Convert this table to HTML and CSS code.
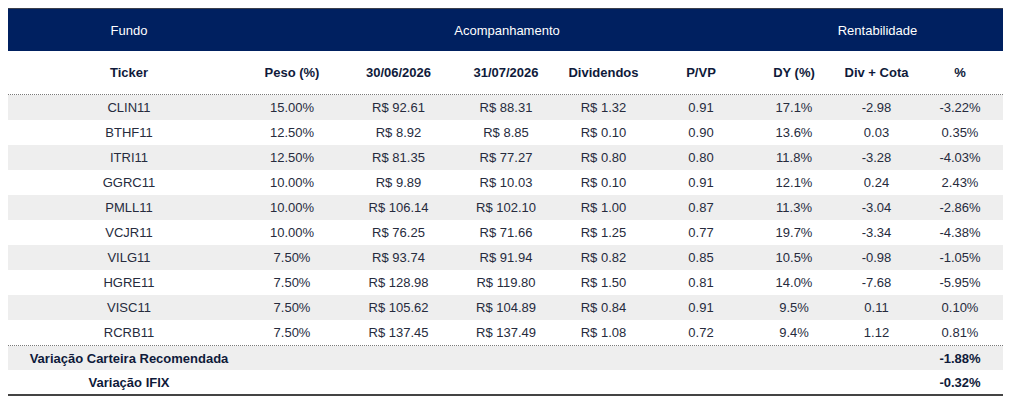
FILE: index.html
```html
<!DOCTYPE html>
<html lang="pt-BR">
<head>
<meta charset="utf-8">
<link rel="stylesheet" href="styles.css">
</head>
<body>
<div class="table">
  <div class="row head">
    <div class="c first">Fundo</div>
    <div class="c acomp">Acompanhamento</div>
    <div class="c rent">Rentabilidade</div>
  </div>
  <div class="row sub">
    <div class="c first">Ticker</div>
    <div class="c">Peso (%)</div>
    <div class="c">30/06/2026</div>
    <div class="c">31/07/2026</div>
    <div class="c">Dividendos</div>
    <div class="c">P/VP</div>
    <div class="c">DY (%)</div>
    <div class="c">Div + Cota</div>
    <div class="c">%</div>
  </div>
  <div class="body">
    <div class="row data grey"><div class="c first">CLIN11</div><div class="c">15.00%</div><div class="c">R$ 92.61</div><div class="c">R$ 88.31</div><div class="c">R$ 1.32</div><div class="c">0.91</div><div class="c">17.1%</div><div class="c">-2.98</div><div class="c">-3.22%</div></div>
    <div class="row data"><div class="c first">BTHF11</div><div class="c">12.50%</div><div class="c">R$ 8.92</div><div class="c">R$ 8.85</div><div class="c">R$ 0.10</div><div class="c">0.90</div><div class="c">13.6%</div><div class="c">0.03</div><div class="c">0.35%</div></div>
    <div class="row data grey"><div class="c first">ITRI11</div><div class="c">12.50%</div><div class="c">R$ 81.35</div><div class="c">R$ 77.27</div><div class="c">R$ 0.80</div><div class="c">0.80</div><div class="c">11.8%</div><div class="c">-3.28</div><div class="c">-4.03%</div></div>
    <div class="row data"><div class="c first">GGRC11</div><div class="c">10.00%</div><div class="c">R$ 9.89</div><div class="c">R$ 10.03</div><div class="c">R$ 0.10</div><div class="c">0.91</div><div class="c">12.1%</div><div class="c">0.24</div><div class="c">2.43%</div></div>
    <div class="row data grey"><div class="c first">PMLL11</div><div class="c">10.00%</div><div class="c">R$ 106.14</div><div class="c">R$ 102.10</div><div class="c">R$ 1.00</div><div class="c">0.87</div><div class="c">11.3%</div><div class="c">-3.04</div><div class="c">-2.86%</div></div>
    <div class="row data"><div class="c first">VCJR11</div><div class="c">10.00%</div><div class="c">R$ 76.25</div><div class="c">R$ 71.66</div><div class="c">R$ 1.25</div><div class="c">0.77</div><div class="c">19.7%</div><div class="c">-3.34</div><div class="c">-4.38%</div></div>
    <div class="row data grey"><div class="c first">VILG11</div><div class="c">7.50%</div><div class="c">R$ 93.74</div><div class="c">R$ 91.94</div><div class="c">R$ 0.82</div><div class="c">0.85</div><div class="c">10.5%</div><div class="c">-0.98</div><div class="c">-1.05%</div></div>
    <div class="row data"><div class="c first">HGRE11</div><div class="c">7.50%</div><div class="c">R$ 128.98</div><div class="c">R$ 119.80</div><div class="c">R$ 1.50</div><div class="c">0.81</div><div class="c">14.0%</div><div class="c">-7.68</div><div class="c">-5.95%</div></div>
    <div class="row data grey"><div class="c first">VISC11</div><div class="c">7.50%</div><div class="c">R$ 105.62</div><div class="c">R$ 104.89</div><div class="c">R$ 0.84</div><div class="c">0.91</div><div class="c">9.5%</div><div class="c">0.11</div><div class="c">0.10%</div></div>
    <div class="row data"><div class="c first">RCRB11</div><div class="c">7.50%</div><div class="c">R$ 137.45</div><div class="c">R$ 137.49</div><div class="c">R$ 1.08</div><div class="c">0.72</div><div class="c">9.4%</div><div class="c">1.12</div><div class="c">0.81%</div></div>
  </div>
  <div class="summary">
    <div class="row total grey"><div class="c first">Variação Carteira Recomendada</div><div class="c last">-1.88%</div></div>
    <div class="row total"><div class="c first">Variação IFIX</div><div class="c last">-0.32%</div></div>
  </div>
</div>
</body>
</html>
```

FILE: styles.css
```css
html, body {
  margin: 0;
  padding: 0;
  background: #ffffff;
}

body {
  font-family: "Liberation Sans", Arial, sans-serif;
  font-size: 13px;
  color: #262b3d;
}

.table {
  width: 995px;
  margin: 8px 0 0 8px;
}

.row {
  display: grid;
  grid-template-columns: 234px 100px 113px 102px 93px 102px 84px 81px 86px;
  align-items: center;
}

.c {
  text-align: center;
  white-space: nowrap;
}

.first {
  padding-left: 8px;
}

.head {
  height: 42px;
  background: #002060;
  border-top: 1px solid #3a3f4c;
  color: #ffffff;
}

.acomp {
  grid-column: 2 / 7;
  padding-left: 20px;
}

.rent {
  grid-column: 7 / 10;
}

.sub {
  height: 43px;
  border-bottom: 1px dotted #7a7a7a;
  font-weight: bold;
  color: #0f1a3a;
}

.data {
  height: 25px;
}

.grey {
  background: #eeeeee;
}

.body {
  border-bottom: 1px dotted #7a7a7a;
}

.summary {
  border-bottom: 2px solid #444444;
}

.total {
  height: 24px;
  font-weight: bold;
  color: #0f1a3a;
}

.last {
  grid-column: 9 / 10;
}
```
